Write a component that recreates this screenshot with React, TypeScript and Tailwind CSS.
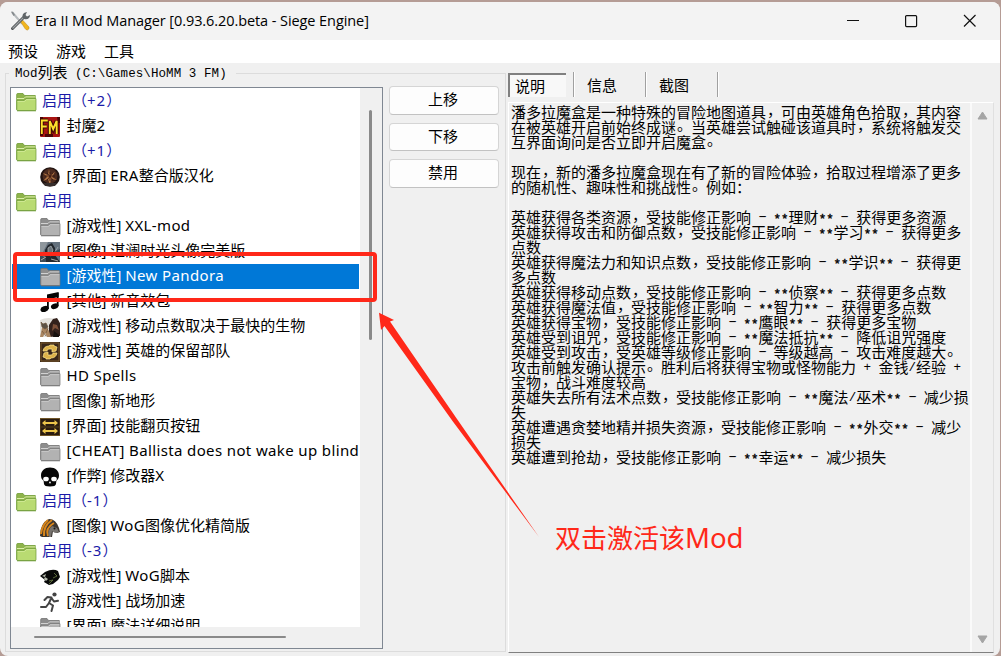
import React from "react";

type Icon = "fm" | "orb" | "gray" | "knight" | "music" | "horse" | "swap" | "arrows" | "skull" | "mane" | "eagle" | "run";
type Row = { group?: boolean; icon?: Icon; text: string; selected?: boolean };

const rows: Row[] = [
  { group: true, text: "启用（+2）" },
  { icon: "fm", text: "封魔2" },
  { group: true, text: "启用（+1）" },
  { icon: "orb", text: "[界面] ERA整合版汉化" },
  { group: true, text: "启用" },
  { icon: "gray", text: "[游戏性] XXL-mod" },
  { icon: "knight", text: "[图像] 湛澜时光头像完美版" },
  { icon: "gray", text: "[游戏性] New Pandora", selected: true },
  { icon: "music", text: "[其他] 新音效包" },
  { icon: "horse", text: "[游戏性] 移动点数取决于最快的生物" },
  { icon: "swap", text: "[游戏性] 英雄的保留部队" },
  { icon: "gray", text: "HD Spells" },
  { icon: "gray", text: "[图像] 新地形" },
  { icon: "arrows", text: "[界面] 技能翻页按钮" },
  { icon: "gray", text: "[CHEAT] Ballista does not wake up blind" },
  { icon: "skull", text: "[作弊] 修改器X" },
  { group: true, text: "启用（-1）" },
  { icon: "mane", text: "[图像] WoG图像优化精简版" },
  { group: true, text: "启用（-3）" },
  { icon: "eagle", text: "[游戏性] WoG脚本" },
  { icon: "run", text: "[游戏性] 战场加速" },
  { icon: "gray", text: "[界面] 魔法详细说明" },
];

const description = [
  "潘多拉魔盒是一种特殊的冒险地图道具，可由英雄角色拾取，其内容",
  "在被英雄开启前始终成谜。当英雄尝试触碰该道具时，系统将触发交",
  "互界面询问是否立即开启魔盒。",
  "",
  "现在，新的潘多拉魔盒现在有了新的冒险体验，拾取过程增添了更多",
  "的随机性、趣味性和挑战性。例如：",
  "",
  "英雄获得各类资源，受技能修正影响 - **理财** - 获得更多资源",
  "英雄获得攻击和防御点数，受技能修正影响 - **学习** - 获得更多",
  "点数",
  "英雄获得魔法力和知识点数，受技能修正影响 - **学识** - 获得更",
  "多点数",
  "英雄获得移动点数，受技能修正影响 - **侦察** - 获得更多点数",
  "英雄获得魔法值，受技能修正影响 - **智力** - 获得更多点数",
  "英雄获得宝物，受技能修正影响 - **鹰眼** - 获得更多宝物",
  "英雄受到诅咒，受技能修正影响 - **魔法抵抗** - 降低诅咒强度",
  "英雄受到攻击，受英雄等级修正影响 - 等级越高 - 攻击难度越大。",
  "攻击前触发确认提示。胜利后将获得宝物或怪物能力 + 金钱/经验 +",
  "宝物，战斗难度较高",
  "英雄失去所有法术点数，受技能修正影响 - **魔法/巫术** - 减少损",
  "失",
  "英雄遭遇贪婪地精并损失资源，受技能修正影响 - **外交** - 减少",
  "损失",
  "英雄遭到抢劫，受技能修正影响 - **幸运** - 减少损失",
];

function Folder({ green }: { green?: boolean }) {
  const c = green
    ? { back: "#8fb44b", front: "#b9db72", line: "#6d9a35", hi: "#dcf0a8" }
    : { back: "#8d8d8d", front: "#b2b2b2", line: "#747474", hi: "#d2d2d2" };
  return (
    <svg width="21" height="20" viewBox="0 0 21 20" className="block shrink-0">
      <path d="M.7 17.5V2.5Q.7 1.5 1.7 1.5H7l1.5 2h10.8v14z" fill={c.back} stroke={c.line} strokeWidth=".8" />
      <path d="M1 6.5h7l1.5-1.6H19.4" fill="none" stroke={c.hi} strokeWidth="1" />
      <path d="M.8 8.5h7.4L10 6.7h10v11q0 .8-.8.8H1.5q-.7 0-.7-.8z" fill={c.front} stroke={c.line} strokeWidth=".7" />
      <path d="M1.5 9.4h7l1.8-1.8h9" fill="none" stroke={c.hi} strokeWidth=".7" />
      <path d="M1 18.8h19" stroke={c.line} strokeWidth=".9" />
    </svg>
  );
}

function ModIcon({ name }: { name: Icon }) {
  if (name === "gray") return <Folder />;
  return (
    <svg width="20" height="20" viewBox="0 0 20 20" className="block shrink-0">
      {name === "fm" && (
        <>
          <rect width="20" height="20" rx="1" fill="#a81412" />
          <path d="M0 0h3v4H0zM17 0h3v6h-2zM5 17h8v3H5zM0 16h3v3H0z" fill="#4c0505" />
          <path d="M1.800 17V3.500h6M2 9.500h4.800M9.800 17V4l3.400 8 3.500-8v13" fill="none" stroke="#3e0904" strokeWidth="4" />
          <path d="M1.800 17V3.500h6M2 9.500h4.800M9.800 17V4l3.400 8 3.500-8v13" fill="none" stroke="#ffe02b" strokeWidth="1.900" />
        </>
      )}
      {name === "orb" && (
        <>
          <circle cx="10" cy="10" r="9.800" fill="#211412" />
          <circle cx="10" cy="9" r="7.500" fill="#4b2a1e" />
          <path d="M9 2l1 6 5-3-3 5 5 3-6-1-1 6-2-6-5 2 4-4-4-4 5 2z" fill="#b47845" />
          <path d="M10 5v9M5 9h10M7 6l6 7M13 6l-6 7" stroke="#3a1711" strokeWidth=".9" />
          <path d="M3 16h14l-2 3H5z" fill="#362d2b" />
        </>
      )}
      {name === "knight" && (
        <>
          <rect width="20" height="20" fill="#64717d" />
          <path d="M0 0h8L2 12H0z" fill="#8f979d" />
          <path d="M5 20V8l3-5 4-2 3 5v7l5 7z" fill="#23282e" />
          <path d="M8 6l3-2 2 4-2 6-3-2zM13 13l5-8" fill="#6d757b" stroke="#a7aeb2" strokeWidth=".8" />
          <path d="M0 12l6 5v3H0zM14 10l6-3v8z" fill="#3d4b57" />
          <path d="M1 18l5-3M11 17l7 2" stroke="#aaa69d" />
        </>
      )}
      {name === "music" && (
        <>
          <path d="M17.700 1v13" fill="none" stroke="#050505" strokeWidth="1.800" />
          <path d="M7 2.600L18.600 0v5L7 7.500z" fill="#050505" />
          <path d="M7.900 3v14" stroke="#050505" strokeWidth="1.800" />
          <ellipse cx="4.600" cy="17" rx="4.200" ry="2.800" transform="rotate(-20 4.600 17)" fill="#050505" />
          <ellipse cx="14.700" cy="14.200" rx="3.900" ry="2.700" transform="rotate(-20 14.700 14.200)" fill="#050505" />
        </>
      )}
      {name === "horse" && (
        <>
          <path d="M0 3q8-4 19 0v17H0z" fill="#e2e0dc" />
          <path d="M9 20V8l4-6 4-1 3 5v13z" fill="#33211c" />
          <path d="M13 7l4 1 2 5-4-2-3 3z" fill="#7e5039" />
          <path d="M0 20l2-9 4-2 3 5 2 6H7l-2-4-2 4z" fill="#a98561" />
          <path d="M1 5l2 2 3-1 2 4-3 2-3-2zM2 14l4 5M8 11l-2 5" fill="#5b5146" stroke="#69513b" strokeWidth=".7" />
          <path d="M13 20l1-6 5 4v2z" fill="#16110f" />
        </>
      )}
      {name === "swap" && (
        <>
          <rect width="20" height="20" fill="#392719" />
          <path d="M1 1h18v18H1z" fill="none" stroke="#7d5b2c" />
          <path d="M3 9q1-5 6-5l1-1h4v1l3 1-1 4-4 1V7H9Q7 7 7 9zM17 11q-1 5-6 5l-1 1H6v-1l-3-1 1-4 4-1v3h3q2 0 2-2z" fill="#ddb24a" stroke="#ffe78c" strokeWidth=".7" />
        </>
      )}
      {name === "arrows" && (
        <>
          <rect y="1.500" width="20" height="17" fill="#2a1c10" stroke="#6f5528" />
          <path d="M2 6l3.500-3v2h9V3L18 6l-3.500 3V7h-9v2zM18 14l-3.500-3v2h-9v-2L2 14l3.500 3v-2h9v2z" fill="#edc64c" />
          <path d="M1 10h18" stroke="#53401f" />
        </>
      )}
      {name === "skull" && (
        <>
          <path d="M10 .5c-5.400 0-9 3.400-9 8 0 2.600 1 4 2.600 5.300L4 17q.3 2.500 6 2.500T16 17l.4-3.200C18 12.500 19 11 19 8.500c0-4.600-3.600-8-9-8z" fill="#060606" />
          <ellipse cx="6" cy="12" rx="2.800" ry="2.300" fill="#fff" />
          <ellipse cx="14" cy="12" rx="2.800" ry="2.300" fill="#fff" />
          <path d="M10 14l1.200 2.200H8.800z" fill="#fff" />
        </>
      )}
      {name === "mane" && (
        <>
          <path d="M0 19Q0 6 9 2q7 0 10 9l1 4-3 1-4-2-1 6H2z" fill="#3b3530" />
          <path d="M1 17Q2 8 8 3M4 19Q3 9 12 3M8 19Q5 11 14 6" fill="none" stroke="#d8861c" strokeWidth="2" />
          <path d="M9 20q-2-7 3-11l5 2 2 4-4 1-3-2-1 6z" fill="#77736f" />
          <circle cx="14.500" cy="11.500" r="1" fill="#171717" />
        </>
      )}
      {name === "eagle" && (
        <>
          <path d="M0 9l5-4q8-4 13-1l2 6-2 3-5 4-4 1-5-3 1-2z" fill="#080909" />
          <path d="M2 9l4-2-1 3 3 2-2 2-2-2 1-2z" fill="#b8bcae" />
          <path d="M9 14l4-1-4 4M14 6l3 3M13 11l4-2" fill="none" stroke="#6f8248" strokeWidth=".8" />
        </>
      )}
      {name === "run" && (
        <>
          <circle cx="14.500" cy="2.500" r="2.100" fill="#444" />
          <path d="M4.500 8l3-3 4 .5L9 11l4 2.500-1.500 5.500M9 11l-3 4H1M11.500 6l2.500 3.500 4-.7" fill="none" stroke="#444" strokeWidth="2" strokeLinecap="round" strokeLinejoin="round" />
        </>
      )}
    </svg>
  );
}

function ToolsIcon() {
  return (
    <svg width="20" height="20" viewBox="0 0 20 20" className="block">
      <path d="M2 1l6 7 4 5" stroke="#b5b9bc" strokeWidth="2" fill="none" />
      <path d="M1 .5l2 .5 2 3-1.500 1z" fill="#84898c" />
      <path d="M10.500 10.500l2-1.500 6.500 7q.8 2-1.500 3-1.500 0-2.500-1.500z" fill="#f2b51d" stroke="#b98516" strokeWidth=".5" />
      <path d="M2.500 17.500L14 6" stroke="#4d5153" strokeWidth="3" strokeLinecap="round" />
      <path d="M2.500 17.500L14 6" stroke="#9da2a4" strokeWidth="1.200" />
      <path d="M13 7q-2-5 4-6l-1.500 3 1.500 1.500L20 4q0 5-6 4z" fill="#606568" />
    </svg>
  );
}

function Label({ row }: { row: Row }) {
  const parts = row.text.split(/([A-Za-z0-9+\-][ -~]*|\[[A-Z][ -~]*)/).filter(Boolean);
  return (
    <span className={row.group ? "ml-[5px] -translate-y-px" : "ml-[6.500px] -translate-y-px"}>
      {parts.map((p, i) => (
        <span key={i} className={/^[ -~]*[A-Za-z0-9]/.test(p) ? (row.group ? "tracking-[1px]" : "tracking-[0.37px]") : ""}>{p}</span>
      ))}
    </span>
  );
}

function Prose({ text }: { text: string }) {
  return (
    <div className="flex h-[15px] whitespace-pre">
      {text.split(/(\*\*|-|[ +/]+|[，。])/).filter(Boolean).map((part, i) => {
        if (part === "**") return <span key={i} className="translate-y-[3.500px] font-['Liberation_Mono'] text-[12.5px] [-webkit-text-stroke:0.4px]">{part}</span>;
        if (part === "-") return <span key={i} className="translate-y-px scale-x-[1.9] font-['Liberation_Mono'] text-[12.5px]">{part}</span>;
        if (/^[ +/]+$/.test(part)) return <span key={i} className="translate-y-[1.500px] font-['Liberation_Mono'] text-[12.5px]">{part}</span>;
        if (part === "。") return <span key={i} className="-translate-y-[3px] translate-x-px">{part}</span>;
        if (part === "，") return <span key={i} className="-translate-y-0.5 translate-x-px">{part}</span>;
        return <span key={i}>{part}</span>;
      })}
    </div>
  );
}

function Divider() {
  return <div className="mt-[-1px] h-[25px] w-[2px] border-l border-[#a0a0a0] bg-white" />;
}

export default function App() {
  return (
    <div className="relative h-[656px] w-[1001px] overflow-hidden bg-[#b59c95] pt-[2px] font-['Noto_Sans','Noto_Sans_CJK_SC',sans-serif] text-black">
      <div className="flex h-[654px] w-[1000px] flex-col overflow-hidden rounded-lg bg-[#f0f0f0]">
        <header className="flex h-[38px] shrink-0 items-center bg-[#f3f3f3] pl-[10px]">
          <ToolsIcon />
          <h1 className="ml-[5px] flex-1 whitespace-pre font-['Open_Sans'] text-[14.5px] tracking-[-0.08px]">Era II Mod Manager [0.93.6.20.beta - Siege Engine]</h1>
          <div className="flex items-center pr-[24px]">
            <svg width="130" height="14" viewBox="0 0 130 14" className="block" fill="none" stroke="#111" strokeWidth="1.200">
              <path d="M1 6.500h12M118 1l11.500 11.500M129.500 1L118 12.500" />
              <rect x="59.600" y="1.600" width="11" height="11" rx="1" />
            </svg>
          </div>
        </header>
        <nav className="flex h-[23px] shrink-0 items-center gap-[18px] bg-white pl-[8px] text-[15px]">
          <span>预设</span>
          <span>游戏</span>
          <span>工具</span>
        </nav>
        <main className="flex h-[593px] pl-[5px]">
          <fieldset className="relative mt-[10px] flex h-[579px] w-[501px] border border-[#dcdcdc] pl-[4px] pt-[13px]">
            <div className="absolute left-[3px] top-[-10px] flex h-[20px] items-center whitespace-pre bg-[#f0f0f0] pl-[6px] pr-[9px] font-['Liberation_Mono','Noto_Sans_CJK_SC',monospace] text-[12.5px] leading-none">
              <span>Mod</span><span className="text-[15px]">列表</span><span className="tracking-[0.08px]"> (C:\Games\HoMM 3 FM)</span>
            </div>
            <section className="flex h-[562px] w-[373px] shrink-0 flex-col border border-[#7f8792] bg-[#f0f0f0]">
              <div className="flex h-[539px]">
                <ul className="w-[349px] overflow-hidden bg-white pl-px pt-px text-[15px]">
                  {rows.map((r, i) => (
                    <li
                      key={i}
                      className={
                        r.selected
                          ? "flex h-[25px] w-[347px] items-center whitespace-pre bg-[#0078d7] pl-[28px] text-white"
                          : r.group
                            ? "flex h-[25px] items-center whitespace-pre pl-[4px] text-[#1a1aa8]"
                            : "flex h-[25px] items-center whitespace-pre pl-[28px]"
                      }
                    >
                      {r.group ? <Folder green /> : <div className="w-[20px]"><ModIcon name={r.icon!} /></div>}
                      <Label row={r} />
                    </li>
                  ))}
                </ul>
                <div className="w-[22px] pl-[9px] pt-[22px]">
                  <div className="h-[230px] w-[3px] rounded-full bg-[#8a8a8a]" />
                </div>
              </div>
              <div className="pl-[23px] pt-[9px]">
                <div className="h-[2px] w-[252px] rounded-full bg-[#8a8a8a]" />
              </div>
            </section>
            <div className="-mt-px ml-[6px] flex w-[110px] flex-col gap-[8px] text-[15px]">
              {["上移", "下移", "禁用"].map((b) => (
                <button key={b} className="flex h-[28.500px] items-center justify-center rounded-[4px] border border-[#d5d5d5] border-b-[#c2c2c2] bg-[#fdfdfd] pb-px pr-[2px] leading-none">
                  {b}
                </button>
              ))}
            </div>
          </fieldset>
          <section className="ml-[2px] flex w-[486px] flex-col pt-[10px]">
            <div className="flex h-[29px] text-[15px] leading-none">
              <div className="flex h-[24px] w-[58px] items-center border-l-2 border-t-2 border-[#808080] bg-[#f8f8f8] pl-[5px]">说明</div>
              <div className="w-[7px]" />
              <Divider />
              <div className="flex h-[24px] w-[70px] items-center pl-[12px]">信息</div>
              <Divider />
              <div className="flex h-[24px] w-[70px] items-center pl-[12px]">截图</div>
              <Divider />
            </div>
            <div className="flex h-[551px] border-b border-l border-r border-t border-b-[#808080] border-l-white border-r-[#e0e0e0] border-t-white">
              <div className="w-[463px] border-r-2 border-r-[#fafafa] pl-[2px] pt-px font-['Noto_Sans_CJK_SC',sans-serif] text-[15px] leading-[15px]">
                {description.map((l, i) => (
                  <Prose key={i} text={l} />
                ))}
              </div>
              <div className="flex flex-1 flex-col items-center justify-between py-[8px]">
                <svg width="11" height="9" viewBox="0 0 11 9"><path d="M5.500 1L10 8H1z" fill="#a5a5a5" stroke="#a5a5a5" strokeLinejoin="round" /></svg>
                <svg width="11" height="9" viewBox="0 0 11 9"><path d="M5.500 8L10 1H1z" fill="#a5a5a5" stroke="#a5a5a5" strokeLinejoin="round" /></svg>
              </div>
            </div>
          </section>
        </main>
      </div>

      <div className="absolute left-[13px] top-[252px] h-[50px] w-[364px] rounded-[4px] border-4 border-[#ff2819]" />
      <svg width="162" height="228" viewBox="0 0 162 228" className="absolute left-[378px] top-[312px]">
        <path d="M1 .7L16 8l-4 1.500L79 107 161 225 74.500 109 6.500 14 3 18z" fill="#ff2819" />
      </svg>
      <div className="absolute left-[555px] top-[521px] whitespace-pre text-[26px] leading-[34px] text-[#ff2819]">双击激活该<span className="text-[27.500px]">Mod</span></div>
    </div>
  );
}
